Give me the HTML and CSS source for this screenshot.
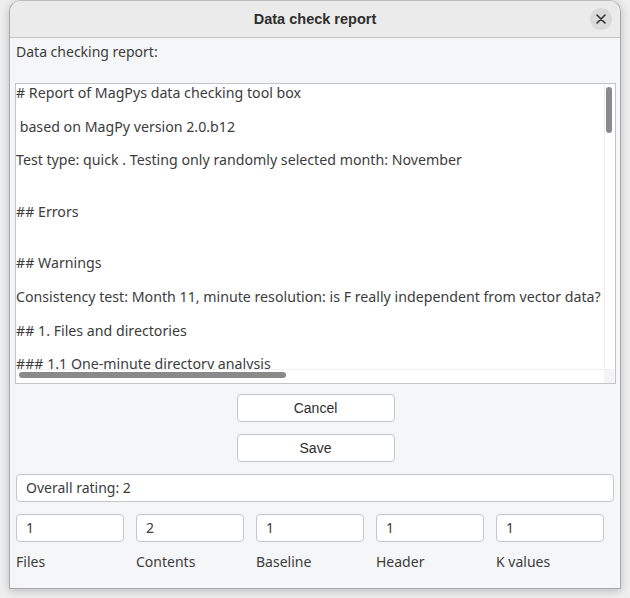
FILE: index.html
```html
<!DOCTYPE html>
<html>
<head>
<meta charset="utf-8">
<link rel="stylesheet" href="styles.css">
</head>
<body>
<div class="window">
  <div class="titlebar">
    <span class="title">Data check report</span>
    <button class="close" aria-label="Close">
      <svg width="10" height="10" viewBox="0 0 10 10"><path d="M1 1L9 9M9 1L1 9" stroke="#2e2e2e" stroke-width="1.6" stroke-linecap="round"/></svg>
    </button>
  </div>
  <div class="content">
    <div class="label-top">Data checking report:</div>
    <div class="report">
      <div class="report-text">
        <p># Report of MagPys data checking tool box</p>
        <p>&nbsp;based on MagPy version 2.0.b12</p>
        <p>Test type: quick . Testing only randomly selected month: November</p>
        <p class="after-blank">## Errors</p>
        <p class="after-blank">## Warnings</p>
        <p>Consistency test: Month 11, minute resolution: is F really independent from vector data?</p>
        <p>## 1. Files and directories</p>
        <p>### 1.1 One-minute directory analysis</p>
      </div>
      <div class="vtrough"><div class="vthumb"></div></div>
      <div class="htrough"><div class="hthumb"></div></div>
      <div class="corner"></div>
    </div>
    <div class="buttons">
      <button class="btn">Cancel</button>
      <button class="btn">Save</button>
    </div>
    <div class="field wide">Overall rating: 2</div>
    <div class="grid">
      <div class="field">1</div>
      <div class="field">2</div>
      <div class="field">1</div>
      <div class="field">1</div>
      <div class="field">1</div>
      <div class="cap">Files</div>
      <div class="cap">Contents</div>
      <div class="cap">Baseline</div>
      <div class="cap">Header</div>
      <div class="cap">K values</div>
    </div>
  </div>
</div>
</body>
</html>
```

FILE: styles.css
```css
html, body {
  margin: 0;
  padding: 0;
}
body {
  background: #efefef;
  width: 630px;
  height: 598px;
  overflow: hidden;
  font-family: "Noto Sans", "Liberation Sans", sans-serif;
  font-size: 14px;
  color: #3c3c3c;
}
.window {
  margin-left: 9px;
  width: 610px;
  height: 587px;
  border: 1px solid #a9a9a9;
  border-top-color: #bdbdbd;
  border-radius: 12px 12px 0 0;
  background: #f5f6f7;
  box-shadow: 0 2px 10px rgba(0,0,0,0.22);
  overflow: hidden;
  display: flex;
  flex-direction: column;
}
.titlebar {
  height: 36px;
  flex: none;
  background: #ebebeb;
  border-bottom: 1px solid #c4c4c4;
  display: flex;
  align-items: center;
  justify-content: center;
  position: relative;
}
.title {
  font-family: "Liberation Sans", sans-serif;
  font-weight: bold;
  font-size: 14.5px;
  color: #2e2e2e;
}
.close {
  position: absolute;
  right: 8px;
  top: 7px;
  width: 22px;
  height: 22px;
  border-radius: 50%;
  border: none;
  background: #dadada;
  padding: 0;
  display: flex;
  align-items: center;
  justify-content: center;
}
.content {
  flex: 1;
  display: flex;
  flex-direction: column;
  padding: 0 4px 0 5px;
}
.label-top {
  margin: 5px 0 0 1px;
  height: 17px;
  line-height: 17px;
}
.report {
  margin-top: 23px;
  height: 299px;
  border: 1px solid #c2c4c8;
  background: #fff;
  position: relative;
  overflow: hidden;
}
.report-text {
  white-space: nowrap;
  font-size: 14.2px;
}
.report-text p {
  margin: 0 0 16.6px 0;
  line-height: 17px;
}
.report-text p.after-blank {
  padding-top: 18px;
}
.vtrough {
  position: absolute;
  right: 0;
  top: 0;
  bottom: 13px;
  width: 10px;
  border-left: 1px solid #ececec;
  background: #fff;
}
.vthumb {
  position: absolute;
  left: 1px;
  top: 3px;
  width: 6px;
  height: 46px;
  border-radius: 3px;
  background: #8a8a8a;
}
.htrough {
  position: absolute;
  left: 0;
  right: 11px;
  bottom: 0;
  height: 13px;
  border-top: 1px solid #efefef;
  background: #fff;
}
.hthumb {
  position: absolute;
  left: 3px;
  top: 2px;
  width: 267px;
  height: 6px;
  border-radius: 3px;
  background: #8a8a8a;
}
.corner {
  position: absolute;
  right: 0;
  bottom: 0;
  width: 11px;
  height: 14px;
  background: #f4f4f4;
}
.buttons {
  display: flex;
  flex-direction: column;
  align-items: center;
  gap: 12px;
  margin-top: 10px;
}
.btn {
  width: 158px;
  height: 28px;
  border: 1px solid #c3c5c9;
  border-radius: 4px;
  background: #fff;
  font-family: "Liberation Sans", sans-serif;
  font-size: 14px;
  color: #2e2e2e;
  padding: 0;
}
.field {
  height: 26px;
  border: 1px solid #c3c5c9;
  border-radius: 4px;
  background: #fff;
  line-height: 26px;
  padding-left: 9px;
  color: #3c3c3c;
}
.wide {
  margin: 12px 2px 0 1px;
}
.grid {
  margin: 12px 0 0 1px;
  display: grid;
  grid-template-columns: repeat(5, 108px);
  column-gap: 12px;
  row-gap: 0;
}
.cap {
  margin-top: 11px;
  line-height: 17px;
}
```
